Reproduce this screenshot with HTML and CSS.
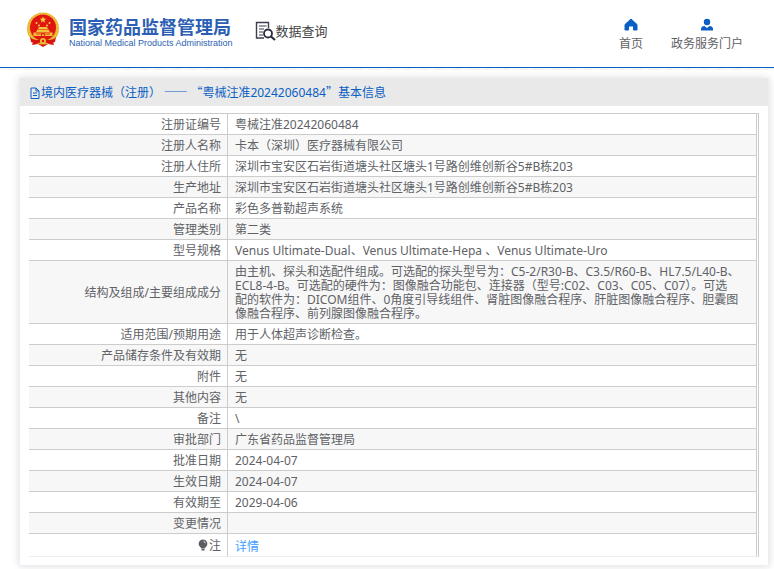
FILE: index.html
```html
<!DOCTYPE html>
<html lang="zh-CN">
<head>
<meta charset="utf-8">
<meta name="viewport" content="width=device-width, initial-scale=1">
<title>国家药品监督管理局 数据查询</title>
<link rel="stylesheet" href="styles.css">
</head>
<body>
<header class="site-header">
  <a class="brand" href="#">
    <svg class="emblem" viewBox="0 0 34 36" aria-hidden="true">
      <path d="M8 27 L26 27 L28 33 L22 32 L17 35 L12 32 L6 33 Z" fill="#d9140f"/>
      <circle cx="17" cy="16.500" r="16" fill="#e8b32c"/>
      <circle cx="17" cy="16.500" r="14.500" fill="none" stroke="#f5d35a" stroke-width="1" stroke-dasharray="2 1"/>
      <circle cx="17" cy="15.500" r="13" fill="#e01710"/>
      <path d="M17 4.500l.9 2.100 2.300.2-1.700 1.500.5 2.200-2-1.200-2 1.200.5-2.200-1.700-1.500 2.300-.2z" fill="#f7cf45"/>
      <g fill="#f7cf45"><circle cx="10.500" cy="11" r="1"/><circle cx="13" cy="13.500" r="1"/><circle cx="21" cy="13.500" r="1"/><circle cx="23.500" cy="11" r="1"/></g>
      <path d="M12 17l1-2h8l1 2zM10 20l1.500-2.500h11L24 20zM7.500 24v-3.500h19V24z" fill="#f3c23a"/>
      <path d="M10 22h14M15.500 24v-2.500h3V24" stroke="#e01710" stroke-width=".8" fill="none"/>
      <path d="M4 25c4 4 8 3 13 2 5 1 9 2 13-2l-1 5c-5 2-8 1-12 0-4 1-7 2-12 0z" fill="#d9140f"/>
      <circle cx="17" cy="29" r="3" fill="#f0bd35"/>
      <circle cx="17" cy="29" r="1.200" fill="#d9140f"/>
    </svg>
    <span class="brand-text">
      <span class="brand-cn">国家药品监督管理局</span>
      <span class="brand-en">National Medical Products Administration</span>
    </span>
  </a>
  <a class="query" href="#">
    <svg class="query-icon" viewBox="0 0 21 20" aria-hidden="true">
      <path d="M9 17H1.500V1.500h12V7" fill="none" stroke="#3d3d4f" stroke-width="1.400"/>
      <path d="M4 5h7.500M4 8h5M4 11h4M4 14h4" stroke="#3d3d4f" stroke-width="1.200"/>
      <circle cx="13" cy="12.500" r="4" fill="#fff" stroke="#2b2b40" stroke-width="1.800"/>
      <path d="M16 15.500l4 3.500" stroke="#2b2b40" stroke-width="2.200"/>
    </svg>
    <span>数据查询</span>
  </a>
  <nav class="nav">
    <a href="#">
      <svg viewBox="0 0 14 14" aria-hidden="true"><path d="M7 1L1 6.500V12h3.500V8h5v4H13V6.500z" fill="#0a5fc4" stroke="#0a5fc4" stroke-linejoin="round"/></svg>
      <span>首页</span>
    </a>
    <a href="#">
      <svg viewBox="0 0 14 14" aria-hidden="true"><circle cx="7" cy="4" r="3.200" fill="#0a5fc4"/><path d="M1 12.500v-1.500c0-2 1.500-2.800 3.500-3L7 10l2.500-2c2 .2 3.500 1 3.500 3v1.500z" fill="#0a5fc4"/></svg>
      <span>政务服务门户</span>
    </a>
  </nav>
</header>
<main class="card">
  <h1 class="card-title">
    <svg class="doc-icon" viewBox="0 0 11 12" aria-hidden="true"><path d="M1.500 1h5l3 3v7.500h-8zM6.500 1v3h3M3.500 6h4M3.500 8.500h4" fill="none" stroke="#0a5fc4"/></svg>
    <span>境内医疗器械（注册） —— “粤械注准<span class="number">20242060484</span>”基本信息</span>
  </h1>
  <div class="card-body">
    <table class="info">
      <tbody>
        <tr><th scope="row">注册证编号</th><td>粤械注准20242060484</td></tr>
        <tr><th scope="row">注册人名称</th><td>卡本（深圳）医疗器械有限公司</td></tr>
        <tr><th scope="row">注册人住所</th><td>深圳市宝安区石岩街道塘头社区塘头1号路创维创新谷5#B栋203</td></tr>
        <tr><th scope="row">生产地址</th><td>深圳市宝安区石岩街道塘头社区塘头1号路创维创新谷5#B栋203</td></tr>
        <tr><th scope="row">产品名称</th><td>彩色多普勒超声系统</td></tr>
        <tr><th scope="row">管理类别</th><td>第二类</td></tr>
        <tr><th scope="row">型号规格</th><td>Venus Ultimate-Dual、Venus Ultimate-Hepa 、Venus Ultimate-Uro</td></tr>
        <tr><th scope="row">结构及组成/主要组成成分</th><td>由主机、探头和选配件组成。可选配的探头型号为：C5-2/R30-B、C3.5/R60-B、HL7.5/L40-B、<br>ECL8-4-B。可选配的硬件为：图像融合功能包、连接器（型号:C02、C03、C05、C07）。可选<br>配的软件为：DICOM组件、0角度引导线组件、肾脏图像融合程序、肝脏图像融合程序、胆囊图<br>像融合程序、前列腺图像融合程序。</td></tr>
        <tr><th scope="row">适用范围/预期用途</th><td>用于人体超声诊断检查。</td></tr>
        <tr><th scope="row">产品储存条件及有效期</th><td>无</td></tr>
        <tr><th scope="row">附件</th><td>无</td></tr>
        <tr><th scope="row">其他内容</th><td>无</td></tr>
        <tr><th scope="row">备注</th><td>\</td></tr>
        <tr><th scope="row">审批部门</th><td>广东省药品监督管理局</td></tr>
        <tr><th scope="row">批准日期</th><td>2024-04-07</td></tr>
        <tr><th scope="row">生效日期</th><td>2024-04-07</td></tr>
        <tr><th scope="row">有效期至</th><td>2029-04-06</td></tr>
        <tr><th scope="row">变更情况</th><td></td></tr>
        <tr class="note"><th scope="row"><svg class="bulb" viewBox="0 0 10 12" aria-hidden="true"><path d="M5 .5a4.300 4.300 0 0 1 2.500 7.800L6.800 9.500H3.200L2.500 8.300A4.300 4.300 0 0 1 5 .5zM3.500 10h3v1.500h-3z" fill="#5b5d62"/><path d="M5.500 2.200q1.600.3 1.800 2" fill="none" stroke="#fff" stroke-width=".8"/></svg>注</th><td><a href="#">详情</a></td></tr>
      </tbody>
    </table>
  </div>
</main>
</body>
</html>
```
FILE: styles.css
```css
* { box-sizing: border-box; }
body {
  margin: 0;
  background: #fff;
  color: #606266;
  font-family: "Noto Sans", "Noto Sans CJK SC", sans-serif;
  font-size: 12px;
  line-height: 14px;
}
a { color: inherit; text-decoration: none; }
svg { display: block; flex: none; }

.site-header {
  display: flex;
  align-items: flex-start;
  height: 68px;
  padding: 12px 31px 0 26px;
  border-bottom: 1px solid #0a5fc4;
}
/* faint hatched strip under the header rule */
.site-header + .card::before {
  content: "";
  position: absolute;
  top: 68px;
  left: 0;
  right: 0;
  height: 2px;
  background: repeating-linear-gradient(135deg, #fff 0 1px, #eee 1px 2px);
}
.brand { display: flex; gap: 9px; color: #2c5fb3; }
.emblem { width: 34px; height: 36px; }
.brand-text { display: flex; flex-direction: column; padding-top: 4px; white-space: nowrap; }
.brand-cn { font: 700 18px/20px "Noto Sans CJK SC", sans-serif; }
.brand-en { font: 9px/15px "Liberation Sans", sans-serif; }
.query {
  display: flex;
  align-items: center;
  margin: 9px 0 0 22px;
  color: #444;
  font-size: 13px;
  line-height: 20px;
  white-space: nowrap;
}
.query-icon { width: 21px; height: 20px; }
.nav { display: flex; gap: 28px; margin: 6px 0 0 auto; }
.nav a {
  display: flex;
  flex-direction: column;
  align-items: center;
  gap: 4px;
  line-height: 16px;
  white-space: nowrap;
}
.nav svg { width: 14px; height: 14px; }

.card {
  margin: 10px 5px 4px 19px;
  border: 1px solid #ebeef5;
  border-top: 0;
  background: #fff;
  box-shadow: 0 0 8px rgba(0, 0, 0, 0.14);
}
.card-title {
  display: flex;
  align-items: center;
  height: 28px;
  margin: 0 0 7px;
  padding: 1px 9px 0;
  background: #e9e9e9;
  color: #0a5fc4;
  font-family: "Noto Sans CJK SC", sans-serif;
  font-size: 12px;
  font-weight: 400;
}
.number { font-family: "Noto Sans", sans-serif; }
.doc-icon { width: 12px; height: 12px; }
.card-body { padding: 0 9px 8px; }
.info {
  width: 100%;
  border-spacing: 0;
  border-top: 1px solid #ccc;
  border-right: 1px solid #ccc;
  padding-right: 1px;
  background: #fff;
}
.info th, .info td {
  height: 21px;
  padding: 4px 6px 2px;
  border-right: 1px solid #ccc;
  border-bottom: 1px solid #ccc;
  vertical-align: middle;
}
.info td { padding-left: 7px; }
.info th { width: 199px; font-weight: 400; text-align: right; }
.info tr:nth-child(even) > * { background: #f7f7f7; }
.info .note > * { height: 23px; border-bottom-color: #ebeef5; }
.info .note td { padding-top: 6px; }
.info .note a { color: #409eff; }
.bulb { display: inline-block; width: 10px; height: 12px; margin-right: 1px; vertical-align: -1px; }
```
